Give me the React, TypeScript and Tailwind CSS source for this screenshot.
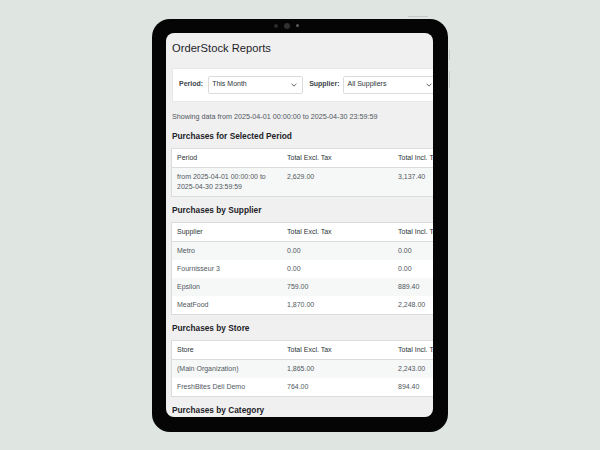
import React from "react";

interface Section {
  title: string;
  first: string;
  rows: string[][];
}

const sections: Section[] = [
  {
    title: "Purchases by Supplier",
    first: "Supplier",
    rows: [
      ["Metro", "0.00", "0.00"],
      ["Fournisseur 3", "0.00", "0.00"],
      ["Epsilon", "759.00", "889.40"],
      ["MeatFood", "1,870.00", "2,248.00"],
    ],
  },
  {
    title: "Purchases by Store",
    first: "Store",
    rows: [
      ["(Main Organization)", "1,865.00", "2,243.00"],
      ["FreshBites Deli Demo", "764.00", "894.40"],
    ],
  },
];

function Chevron() {
  return (
    <svg width="6" height="4" viewBox="0 0 6 4" className="shrink-0">
      <path d="M0.6 0.8 L3 3.1 L5.4 0.8" fill="none" stroke="#50575e" strokeWidth="0.9" />
    </svg>
  );
}

function Select({ label }: { label: string }) {
  return (
    <div className="w-[95px] h-[18px] shrink-0 bg-white border border-[#dcdcde] rounded-[2px] flex items-center justify-between pl-[3px] pr-[5px] text-[7px] text-[#2c3338]">
      <span>{label}</span>
      <Chevron />
    </div>
  );
}

function Heading({ children }: { children: React.ReactNode }) {
  return (
    <h2 className="mt-[9px] mb-[8px] text-[8.3px] leading-[10px] font-bold text-[#1d2327]">
      {children}
    </h2>
  );
}

function Table({ first, rows }: { first: string; rows: React.ReactNode[][] }) {
  return (
    <table className="w-[333px] table-fixed border-collapse bg-white outline outline-1 outline-[#dcdcde] text-[7px] leading-[10px]">
      <colgroup>
        <col className="w-[110px]" />
        <col className="w-[111px]" />
        <col className="w-[112px]" />
      </colgroup>
      <thead>
        <tr className="border-b border-[#dcdcde]">
          {[first, "Total Excl. Tax", "Total Incl. Tax"].map((h) => (
            <th key={h} className="text-left font-normal text-[#2c3338] px-[5px] py-[4px] h-[18px] whitespace-nowrap">
              {h}
            </th>
          ))}
        </tr>
      </thead>
      <tbody>
        {rows.map((r, i) => (
          <tr key={i} className={i % 2 === 0 ? "bg-[#f6f7f7]" : "bg-white"}>
            {r.map((c, j) => (
              <td key={j} className="align-top text-[#50575e] px-[5px] py-[4px] whitespace-nowrap">
                {c}
              </td>
            ))}
          </tr>
        ))}
      </tbody>
    </table>
  );
}

export default function App() {
  return (
    <div className="w-[600px] h-[450px] bg-[#dfe6e2] flex items-center justify-center font-['Liberation_Sans',Arial,sans-serif]">
      <div className="relative w-[296px] h-[413px] bg-[#050505] rounded-[18px] pt-[14px] pl-[14px] pr-[15px] pb-[15px]">
        {/* camera */}
        <div className="absolute top-[4px] left-[122px] flex items-center gap-[6px]">
          <div className="w-[4px] h-[4px] rounded-full bg-[#2b2b2b]" />
          <div className="w-[6px] h-[6px] rounded-full bg-[#303030]" />
          <div className="w-[3px] h-[3px] rounded-full bg-[#5a5a5a]" />
        </div>
        {/* hardware buttons */}
        <div className="absolute -top-[3px] left-[256px] w-[20px] h-[1px] bg-[#c3cac7]" />
        <div className="absolute -right-[2px] top-[31px] w-[1px] h-[10px] bg-[#c3cac7]" />
        <div className="absolute -right-[2px] top-[52px] w-[1px] h-[17px] bg-[#c3cac7]" />

        <div className="h-full rounded-[8px] bg-[#f0f0f1] overflow-hidden">
          <div className="w-[360px] pl-[6px] pt-[8px]">
            <h1 className="text-[11.2px] leading-[14px] font-normal text-[#1d2327]">OrderStock Reports</h1>

            <div className="mt-[13px] w-[340px] h-[34px] bg-white border border-[#e8e8ea] flex items-center pl-[6px] text-[7px]">
              <span className="font-bold text-[#3c434a] mr-[5px]">Period:</span>
              <Select label="This Month" />
              <span className="font-bold text-[#3c434a] ml-[6px] mr-[4px]">Supplier:</span>
              <Select label="All Suppliers" />
            </div>

            <p className="mt-[10px] text-[7.2px] leading-[10px] text-[#50575e]">
              Showing data from 2025-04-01 00:00:00 to 2025-04-30 23:59:59
            </p>

            <Heading>Purchases for Selected Period</Heading>
            <Table
              first="Period"
              rows={[
                [
                  <>
                    from 2025-04-01 00:00:00 to
                    <br />
                    2025-04-30 23:59:59
                  </>,
                  "2,629.00",
                  "3,137.40",
                ],
              ]}
            />

            {sections.map((s) => (
              <div key={s.title}>
                <Heading>{s.title}</Heading>
                <Table first={s.first} rows={s.rows} />
              </div>
            ))}

            <Heading>Purchases by Category</Heading>
          </div>
        </div>
      </div>
    </div>
  );
}
